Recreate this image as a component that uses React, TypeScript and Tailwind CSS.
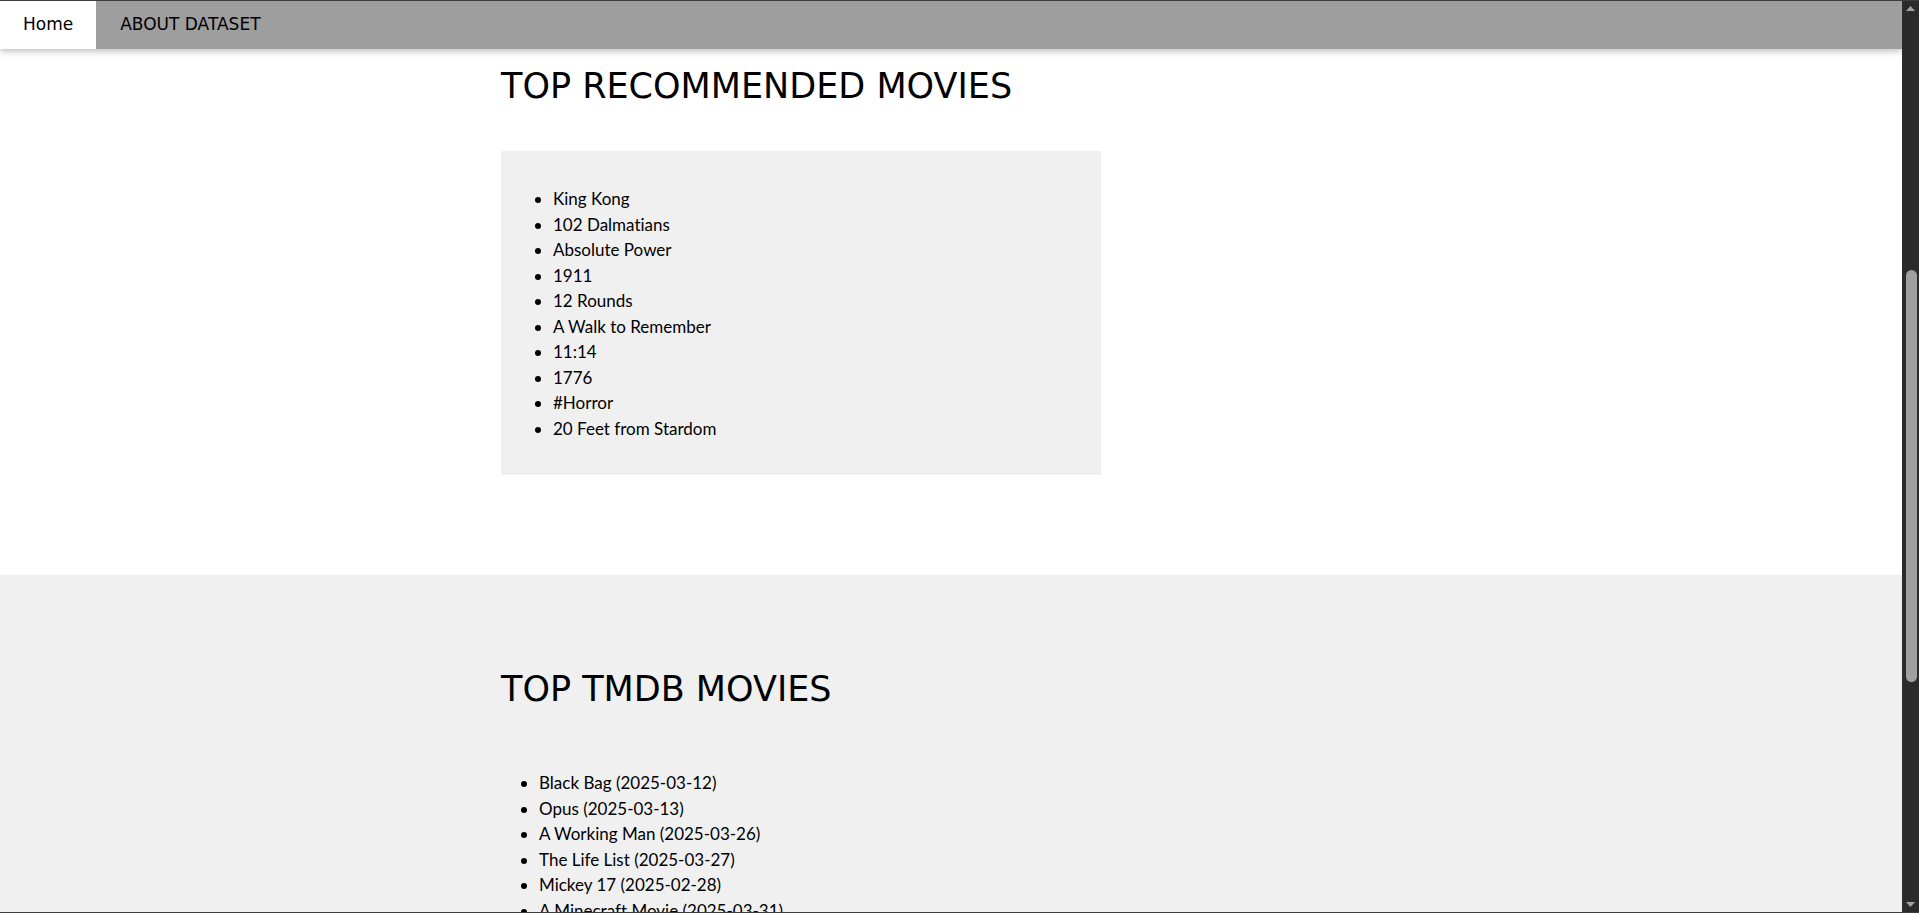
const recommended = [
  "King Kong",
  "102 Dalmatians",
  "Absolute Power",
  "1911",
  "12 Rounds",
  "A Walk to Remember",
  "11:14",
  "1776",
  "#Horror",
  "20 Feet from Stardom",
];

const tmdb = [
  "Black Bag (2025-03-12)",
  "Opus (2025-03-13)",
  "A Working Man (2025-03-26)",
  "The Life List (2025-03-27)",
  "Mickey 17 (2025-02-28)",
  "A Minecraft Movie (2025-03-31)",
];

const heading = "font-['DejaVu_Sans',sans-serif] text-[35px] leading-[42px] text-black";
const body = "font-['Lato',sans-serif] text-[17px] leading-[25.5px] text-black [font-variant-ligatures:none]";

function Scrollbar() {
  return (
    <div className="w-[17px] shrink-0 bg-[#2b2b2b] flex flex-col items-center">
      <svg width="9" height="6" viewBox="0 0 9 6" className="mt-[5px]">
        <path d="M4.5 0 L9 5 L0 5 Z" fill="#a3a3a3" />
      </svg>
      <div className="mt-[258px] w-[11px] h-[412px] rounded-full bg-[#9f9f9f] ml-[1px]" />
      <div className="flex-1" />
      <svg width="9" height="6" viewBox="0 0 9 6" className="mb-[4px]">
        <path d="M0 0 L9 0 L4.5 5 Z" fill="#a3a3a3" />
      </svg>
    </div>
  );
}

export default function App() {
  return (
    <div className="h-[913px] overflow-hidden border-y border-[#3d3d3d] flex bg-white">
      <div className="flex-1 flex flex-col overflow-hidden">
        <div className="relative z-10 h-[48px] shrink-0 flex bg-[#9e9e9e] shadow-[0_2px_5px_0_rgba(0,0,0,0.16),0_2px_10px_0_rgba(0,0,0,0.12)] font-['DejaVu_Sans',sans-serif] text-[17px] text-black">
          <div className="bg-white px-[23px] flex items-center">Home</div>
          <div className="px-[24px] flex items-center">ABOUT DATASET</div>
        </div>

        <div className="bg-white pb-[100px]">
          <div className="w-[900px] mx-auto">
            <h1 className={`${heading} mt-[16px]`}>TOP RECOMMENDED MOVIES</h1>
            <div className="mt-[44px] w-[600px] bg-[#f0f0f0] pt-[35px] pb-[34px] pl-[52px]">
              <ul className={`${body} list-disc`}>
                {recommended.map((m) => (
                  <li key={m}>{m}</li>
                ))}
              </ul>
            </div>
          </div>
        </div>

        <div className="flex-1 bg-[#f0f0f0]">
          <div className="w-[900px] mx-auto">
            <h1 className={`${heading} mt-[93px]`}>TOP TMDB MOVIES</h1>
            <ul className={`${body} list-disc mt-[60px] pl-[38px]`}>
              {tmdb.map((m) => (
                <li key={m}>{m}</li>
              ))}
            </ul>
          </div>
        </div>
      </div>
      <Scrollbar />
    </div>
  );
}
